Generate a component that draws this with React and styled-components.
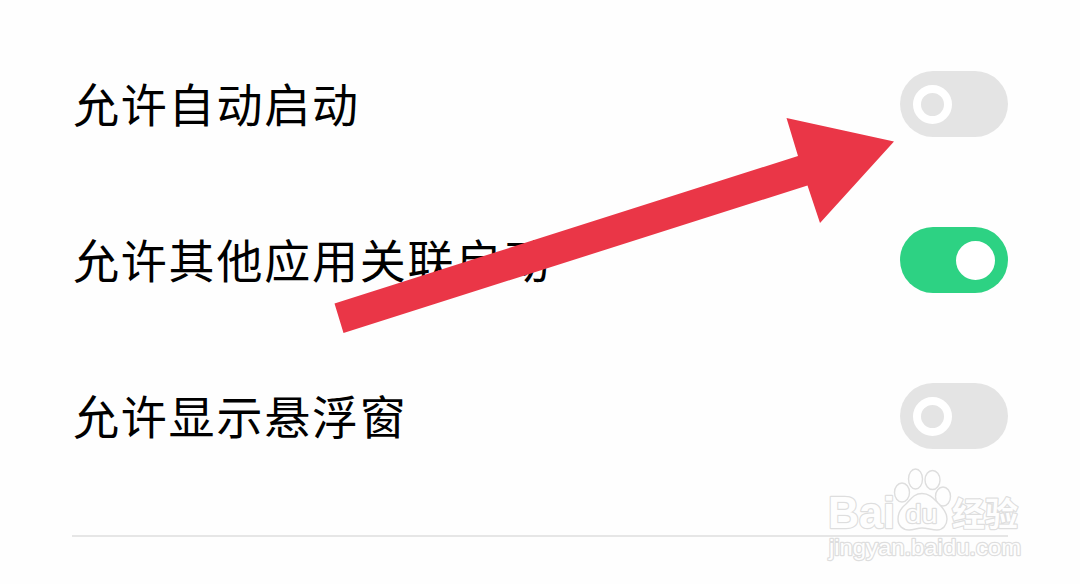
import React, { Component } from 'react';
import styled, { createGlobalStyle } from 'styled-components';

const GlobalStyle = createGlobalStyle`
  body {
    margin: 0;
    background: #fefefe;
    overflow: hidden;
  }
`;

const Wrapper = styled.div`
  box-sizing: border-box;
  width: 1080px;
  height: 584px;
  padding: 26px 72px 0;
  position: relative;
  overflow: hidden;
  background: #fefefe;
  font-family: 'Noto Sans CJK SC', sans-serif;
`;

const List = styled.div`
  display: flex;
  flex-direction: column;
  height: 511px;
  box-sizing: border-box;
  border-bottom: 2px solid #e6e6e6;
`;

const Row = styled.div`
  display: flex;
  align-items: center;
  justify-content: space-between;
  height: 156px;
`;

const Label = styled.span`
  padding: 0 0 5px 1px;
  color: #000;
  font-size: 46px;
  letter-spacing: 1.8px;
  line-height: 72px;
  white-space: nowrap;
`;

const Switch = styled.button`
  display: flex;
  align-items: center;
  justify-content: ${props => (props.$on ? 'flex-end' : 'flex-start')};
  width: 108px;
  height: 66px;
  padding: 0 13px;
  border: 0;
  border-radius: 33px;
  background: ${props => (props.$on ? '#2dd283' : '#e4e4e4')};
  cursor: pointer;
`;

const Knob = styled.span`
  box-sizing: border-box;
  width: 39px;
  height: 39px;
  border: 8px solid #fff;
  border-radius: 50%;
  background: ${props => (props.$on ? '#fff' : 'transparent')};
`;

const Arrow = styled.svg`
  position: absolute;
  left: 330px;
  top: 110px;
  pointer-events: none;
`;

const Watermark = styled.svg`
  position: absolute;
  left: 820px;
  top: 460px;
  pointer-events: none;
  fill: #fefefe;
  stroke: #dedede;
  stroke-width: 1.4;
  font-family: 'Liberation Sans', 'Noto Sans CJK SC', sans-serif;
  text {
    paint-order: stroke;
    stroke-width: 2.4;
    stroke: #dedede;
    stroke-linejoin: round;
  }
`;

class App extends Component {
  constructor(props) {
    super(props);
    this.state = {
      items: [
        { title: '允许自动启动', on: false },
        { title: '允许其他应用关联启动', on: true },
        { title: '允许显示悬浮窗', on: false },
      ],
    };
  }

  _toggle = index => {
    this.setState(({ items }) => ({
      items: items.map((item, i) => (i === index ? { ...item, on: !item.on } : item)),
    }));
  }

  render() {
    const { items } = this.state;
    return (
      <Wrapper>
        <GlobalStyle />
        <List>
          {items.map((item, i) => (
            <Row key={item.title}>
              <Label>{item.title}</Label>
              <Switch
                $on={item.on}
                role="switch"
                aria-checked={item.on}
                aria-label={item.title}
                onClick={() => this._toggle(i)}
              >
                <Knob $on={item.on} />
              </Switch>
            </Row>
          ))}
        </List>
        <Arrow width="570" height="230" viewBox="330 110 570 230">
          <path fill="#ea3647" d="M334.5 303.5 798 156 786.5 118 894 141.5 820 223 807.5 185.5 343.5 333Z" />
        </Arrow>
        <Watermark width="210" height="110" viewBox="820 460 210 110">
          <text x="828" y="528" fontSize="44" fontWeight="700" textLength="67" lengthAdjust="spacingAndGlyphs">Bai</text>
          <ellipse cx="902" cy="492.5" rx="7.5" ry="9.5" />
          <ellipse cx="915.5" cy="479" rx="7" ry="10" />
          <ellipse cx="932.5" cy="480" rx="7.5" ry="9.5" />
          <ellipse cx="943" cy="496.5" rx="7.5" ry="9.5" />
          <path d="M922 493.5C914 493.5 911 499 906 504C901 508 898 513 898 519C898 526 903 530 909 530C914 530 917 528 922 528C927 528 932 530 937 530C943 530 947 525 947 519C947 513 943 508 939 504C934 499 930 493.5 922 493.5Z" />
          <text x="905.5" y="523" fontSize="26" textLength="32" lengthAdjust="spacingAndGlyphs">du</text>
          <text x="952" y="526" fontSize="33" fontWeight="700">经验</text>
          <text x="829" y="555" fontSize="22" textLength="192" lengthAdjust="spacingAndGlyphs">jingyan.baidu.com</text>
        </Watermark>
      </Wrapper>
    );
  }
}

export default App;
